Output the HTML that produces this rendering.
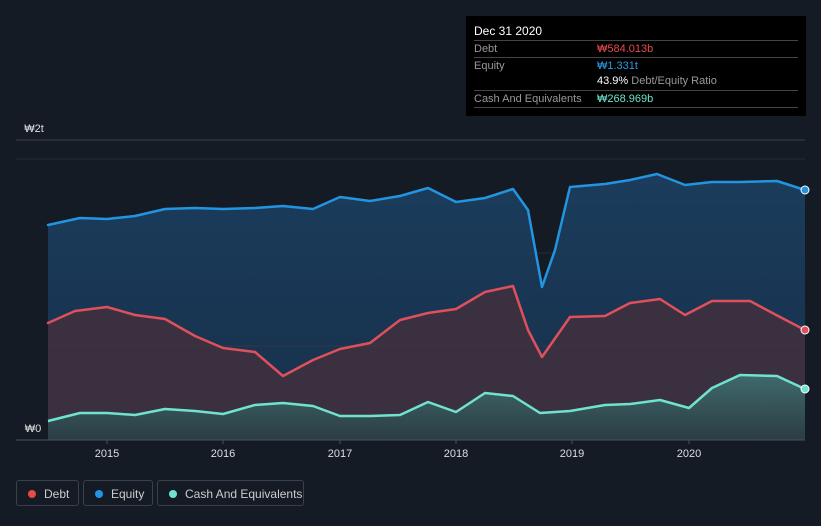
<!DOCTYPE html>
<html><head><meta charset="utf-8"><style>
body{margin:0;width:821px;height:526px;background:#151b25;font-family:"Liberation Sans","Noto Sans CJK KR",sans-serif;overflow:hidden;position:relative}
.tip{position:absolute;left:466px;top:16px;width:340px;height:100px;background:#000;}
.tip .h{position:absolute;left:8px;top:8px;color:#fff;font-size:12px}
.row{position:absolute;left:8px;width:324px;border-top:1px solid #444;font-size:11px;color:#999;height:16px;line-height:16px}
.row span{position:absolute;left:123px}
.leg{position:absolute;top:480px;height:26px;border:1px solid #3a404a;border-radius:3px;color:#ccc;font-size:12px;line-height:26px;box-sizing:border-box}
.leg i{position:absolute;left:11px;top:9px;width:8px;height:8px;border-radius:50%}
.leg b{font-weight:normal;position:absolute;left:27px}
</style></head><body>
<svg width="821" height="526" style="position:absolute;left:0;top:0">
<defs>
<linearGradient id="ge" x1="0" y1="0" x2="0" y2="1"><stop offset="0" stop-color="#1b3c5c"/><stop offset="1" stop-color="#16304a"/></linearGradient>
<linearGradient id="gc" x1="0" y1="0" x2="0" y2="1"><stop offset="0" stop-color="#3f6a6b"/><stop offset="1" stop-color="#2b3c44"/></linearGradient>
</defs>
<line x1="16" y1="140" x2="805" y2="140" stroke="#3a404a"/>
<line x1="16" y1="159" x2="805" y2="159" stroke="#262d38"/>
<polygon fill="url(#ge)" points="48,440 48,225 80,218 107,219 135,216 165,209 195,208 223,209 255,208 283,206 313,209 340,197 370,201 400,196 428,188 456,202 485,198 513,189 528,210 542,287 555,250 570,187 605,184 630,180 657,174 685,185 712,182 740,182 777,181 805,190 805,440"/>
<polygon fill="#3a3040" points="48,440 48,323 75,311 107,307 135,315 165,319 195,336 223,348 255,352 283,376 313,360 340,349 370,343 400,320 428,313 456,309 485,292 513,286 528,330 542,357 570,317 605,316 630,303 660,299 685,315 712,301 750,301 780,317 805,330 805,440"/>
<polygon fill="url(#gc)" points="48,440 48,421 80,413 107,413 135,415 165,409 195,411 223,414 255,405 283,403 313,406 340,416 370,416 400,415 428,402 456,412 485,393 513,396 540,413 570,411 605,405 630,404 660,400 689,408 712,388 740,375 777,376 805,389 805,440"/>
<line x1="48" y1="253" x2="805" y2="253" stroke="#2a3a4e" stroke-opacity=".6"/>
<line x1="48" y1="346" x2="805" y2="346" stroke="#44384a" stroke-opacity=".6"/>
<g fill="none" stroke-width="2.5" stroke-linejoin="round" stroke-linecap="round">
<polyline stroke="#2394df" points="48,225 80,218 107,219 135,216 165,209 195,208 223,209 255,208 283,206 313,209 340,197 370,201 400,196 428,188 456,202 485,198 513,189 528,210 542,287 555,250 570,187 605,184 630,180 657,174 685,185 712,182 740,182 777,181 805,190"/>
<polyline stroke="#e0505c" points="48,323 75,311 107,307 135,315 165,319 195,336 223,348 255,352 283,376 313,360 340,349 370,343 400,320 428,313 456,309 485,292 513,286 528,330 542,357 570,317 605,316 630,303 660,299 685,315 712,301 750,301 780,317 805,330"/>
<polyline stroke="#6fe3cf" points="48,421 80,413 107,413 135,415 165,409 195,411 223,414 255,405 283,403 313,406 340,416 370,416 400,415 428,402 456,412 485,393 513,396 540,413 570,411 605,405 630,404 660,400 689,408 712,388 740,375 777,376 805,389"/>
</g>
<circle cx="805" cy="190" r="4" fill="#2394df" stroke="#fff"/>
<circle cx="805" cy="330" r="4" fill="#e0505c" stroke="#fff"/>
<circle cx="805" cy="389" r="4" fill="#6fe3cf" stroke="#fff"/>
<rect x="16" y="420" width="32" height="20" fill="#151b25"/>
<line x1="16" y1="440" x2="805" y2="440" stroke="#4a505a"/>
<g stroke="#4a505a"><line x1="107" y1="440" x2="107" y2="444"/><line x1="223" y1="440" x2="223" y2="444"/><line x1="340" y1="440" x2="340" y2="444"/><line x1="456" y1="440" x2="456" y2="444"/><line x1="572" y1="440" x2="572" y2="444"/><line x1="689" y1="440" x2="689" y2="444"/></g>
<g fill="#ddd" font-size="11" text-anchor="middle" font-family="Liberation Sans,sans-serif">
<text x="107" y="457">2015</text><text x="223" y="457">2016</text><text x="340" y="457">2017</text><text x="456" y="457">2018</text><text x="572" y="457">2019</text><text x="689" y="457">2020</text>
<text x="34" y="132">₩2t</text><text x="33" y="432">₩0</text>
</g>
</svg>
<div class="tip">
<div class="h">Dec 31 2020</div>
<div class="row" style="top:24px">Debt<span style="color:#e84a4a">₩584.013b</span></div>
<div class="row" style="top:41px">Equity<span style="color:#2a9be6">₩1.331t</span></div>
<div class="row" style="top:57px;border:none"><span><b style="color:#fff;font-weight:normal">43.9%</b> Debt/Equity Ratio</span></div>
<div class="row" style="top:74px">Cash And Equivalents<span style="color:#6fe3cf">₩268.969b</span></div>
<div class="row" style="top:91px;height:0"></div>
</div>
<div class="leg" style="left:16px;width:63px"><i style="background:#e84a4a"></i><b>Debt</b></div>
<div class="leg" style="left:83px;width:70px"><i style="background:#2394df"></i><b>Equity</b></div>
<div class="leg" style="left:157px;width:147px"><i style="background:#6fe3cf"></i><b>Cash And Equivalents</b></div>
</body></html>
